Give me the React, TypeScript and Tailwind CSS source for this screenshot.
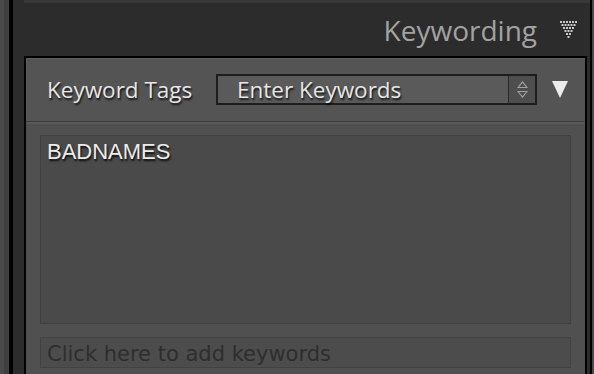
import React from "react";

const label = "font-['Open_Sans',sans-serif] text-[22.5px] leading-[28px] text-[#e6e6e6] [text-shadow:1px_2px_2px_rgba(0,0,0,0.8)]";

function DotTriangle() {
  const dots: { x: number; y: number }[] = [];
  for (let row = 0; row < 6; row++) {
    for (let i = 0; i < 6 - row; i++) {
      dots.push({ x: row * 1.5 + i * 3, y: row * 3 });
    }
  }
  return (
    <svg width="18" height="18" viewBox="0 0 18 18" className="shrink-0">
      {dots.map((d, k) => (
        <rect key={k} x={d.x} y={d.y} width="2" height="2" fill="#c9c9c9" />
      ))}
    </svg>
  );
}

function Stepper() {
  return (
    <div className="flex h-full w-[27px] shrink-0 flex-col items-center justify-center gap-[3px] border-l border-[#2a2a2a] bg-[#4e4e4e]">
      <svg width="11" height="7" viewBox="0 0 11 7">
        <path d="M1 6.5 L5.5 0.8 L10 6.5 Z" fill="none" stroke="#a2a2a2" strokeWidth="1.1" />
      </svg>
      <svg width="11" height="7" viewBox="0 0 11 7">
        <path d="M1 0.5 L5.5 6.2 L10 0.5 Z" fill="none" stroke="#a2a2a2" strokeWidth="1.1" />
      </svg>
    </div>
  );
}

export default function App() {
  return (
    <div className="flex h-[374px] w-[594px] overflow-hidden bg-[#2c2c2c]">
      {/* left edge strips */}
      <div className="flex w-[9px] shrink-0">
        <div className="w-[4px] bg-[#4a4a4a]" />
        <div className="w-[5px] bg-[#3f3f3f]" />
      </div>
      <div className="w-[4px] shrink-0 bg-black" />

      <div className="flex min-w-0 flex-1 flex-col bg-[#2c2c2c]">
        <div className="ml-[11px] h-[3px] shrink-0 bg-[#383838]" />

        {/* header */}
        <div className="flex h-[53px] shrink-0 items-start justify-end pr-[12px] pt-[11px]">
          <span className="font-['Open_Sans',sans-serif] text-[28px] leading-[32px] text-[#a2a2a2]">
            Keywording
          </span>
          <div className="ml-[23px] mt-[7px]">
            <DotTriangle />
          </div>
        </div>

        {/* panel */}
        <div className="ml-[11px] mr-[3px] flex flex-1 flex-col border-x-2 border-t-2 border-black bg-[#505050]">
          <div className="flex h-[64px] shrink-0 items-center border-b border-[#3d3d3d] bg-[#545454] pl-[21px] pr-[17px] shadow-[inset_1px_1px_0_#5c5c5c]">
            <span className={label}>Keyword Tags</span>
            <div className="ml-auto flex h-[31px] w-[321px] items-stretch border-2 border-[#1e1e1e] bg-[#5a5a5a]">
              <div className="flex flex-1 items-center pl-[19px]">
                <span className={label}>Enter Keywords</span>
              </div>
              <Stepper />
            </div>
            <svg width="16" height="17" viewBox="0 0 16 17" className="ml-[15px] shrink-0">
              <path d="M0 0 H16 L8 17 Z" fill="#ececec" />
            </svg>
          </div>
          <div className="h-[2px] shrink-0 bg-[#585858]" />

          <div className="flex flex-col px-[14px] pt-[11px]">
            <div className="h-[189px] border border-[#404040] bg-[#4a4a4a] pl-[6px] pt-[3px]">
              <div className="font-['Liberation_Sans',Arial,sans-serif] text-[22px] leading-[26px] text-[#ececec] [text-shadow:1px_2px_2px_rgba(0,0,0,0.85)]">
                BADNAMES
              </div>
            </div>
            <div className="mt-[13px] h-[31px] border border-[#424242] bg-[#4c4c4c] pl-[6px] pt-[4px]">
              <div className="font-['DejaVu_Sans',sans-serif] text-[21px] leading-[24px] text-[#2e2e2e]">
                Click here to add keywords
              </div>
            </div>
          </div>
        </div>
      </div>

      {/* right edge strips */}
      <div className="w-[2px] shrink-0 bg-black" />
      <div className="w-[2px] shrink-0 bg-[#4a4a4a]" />
    </div>
  );
}
